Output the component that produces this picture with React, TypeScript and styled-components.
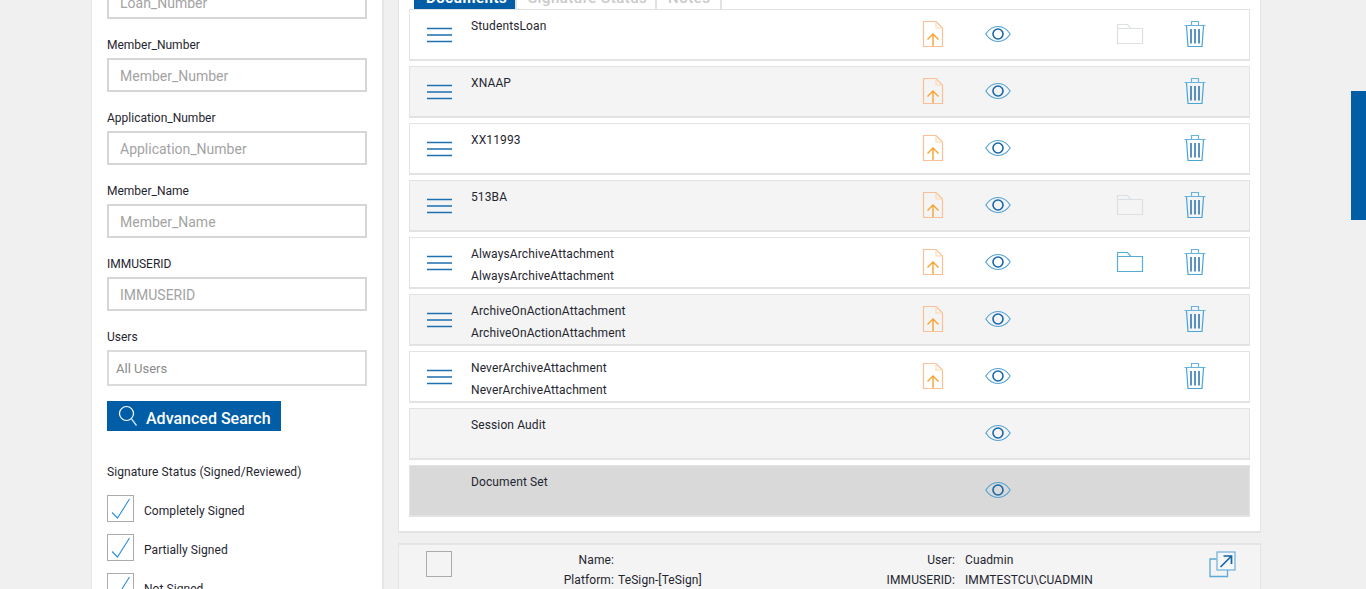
import React from "react";
import styled, { createGlobalStyle } from "styled-components";

const GlobalStyle = createGlobalStyle`
  html, body {
    margin: 0;
    padding: 0;
    height: 100%;
    overflow: hidden;
    background: #f0f0f0;
    font-family: Roboto, "Liberation Sans", Arial, sans-serif;
  }
  * { box-sizing: border-box; }
`;

const Page = styled.div`
  position: relative;
  height: 589px;
  overflow: hidden;
  display: flex;
  align-items: flex-start;
  padding-left: 91px;
  gap: 14px;
`;

const Sidebar = styled.aside`
  width: 293px;
  height: 640px;
  flex: none;
  margin-top: -36px;
  padding: 0 15px;
  background: #fff;
  border-left: 1px solid #e6e6e6;
  border-right: 2px solid #e6e6e6;
`;

const Field = styled.div`
  margin-bottom: 18px;
`;

const FieldLabel = styled.label`
  display: block;
  height: 16px;
  margin-bottom: 5px;
  font-size: 12px;
  line-height: 16px;
  color: #1f2630;
`;

const TextInput = styled.input`
  display: block;
  width: 260px;
  height: 34px;
  padding: 2px 11px 0;
  border: 2px solid #d6d6d6;
  border-radius: 0;
  outline: none;
  background: #fff;
  font-family: inherit;
  font-size: 14px;
  &::placeholder {
    color: #a3a3a3;
    opacity: 1;
  }
`;

const SelectBox = styled.div`
  width: 260px;
  height: 36px;
  padding-left: 7px;
  display: flex;
  align-items: center;
  border: 2px solid #dadada;
  font-size: 13px;
  color: #8b8b8b;
`;

const SearchButton = styled.button`
  display: flex;
  align-items: center;
  gap: 8px;
  width: 174px;
  height: 30px;
  margin-top: -3px;
  padding: 0 0 0 11px;
  border: none;
  background: #005da6;
  color: #fff;
  font-family: inherit;
  font-size: 16px;
  font-weight: 500;
`;

const SearchLabel = styled.span`
  padding-top: 4px;
`;

const SearchGlyph = styled.span`
  display: flex;
  margin-top: -1px;
`;

const StatusTitle = styled.div`
  margin: 33px 0 15px;
  height: 16px;
  font-size: 12px;
  line-height: 16px;
  letter-spacing: 0.08px;
  color: #1f2630;
`;

const CheckRow = styled.div`
  display: flex;
  align-items: center;
  gap: 10px;
  height: 27px;
  margin-bottom: 12px;
  font-size: 12px;
  letter-spacing: 0.06px;
  color: #1f2630;
`;

const CheckText = styled.span`
  padding-top: 4px;
`;

const CheckBox = styled.span`
  flex: none;
  display: flex;
  align-items: center;
  justify-content: center;
  width: 27px;
  height: 27px;
  border: 1px solid #ababab;
  background: #fff;
`;

const Content = styled.main`
  width: 863px;
  flex: none;
`;

const Panel = styled.section`
  height: 553px;
  margin-top: -20px;
  padding: 0 10px;
  background: #fff;
  border-right: 1px solid #e4e4e4;
  border-bottom: 2px solid #e4e4e4;
  border-left: 1px solid #e4e4e4;
`;

const Tabs = styled.div`
  display: flex;
  height: 29px;
  padding-left: 5px;
`;

const Tab = styled.div<{ $active?: boolean; $width: number }>`
  width: ${({ $width }) => $width}px;
  height: 29px;
  padding-left: ${({ $active }) => ($active ? 12 : 11)}px;
  border-right: 2px solid #e2e2e2;
  background: ${({ $active }) => ($active ? "#005da6" : "#fff")};
  color: ${({ $active }) => ($active ? "#fff" : "#c9c9c9")};
  font-size: 15px;
  font-weight: ${({ $active }) => ($active ? 700 : 500)};
  line-height: 36px;
  letter-spacing: 0.5px;
  white-space: nowrap;
`;

const RowList = styled.div`
  display: flex;
  flex-direction: column;
  gap: 5px;
`;

const Row = styled.div<{ $tone: "white" | "grey" | "dark" }>`
  display: grid;
  grid-template-columns: 61px 429px 65px 66px 66px 65px 66px;
  align-items: center;
  height: 52px;
  border: 1px solid #e3e3e3;
  border-bottom-width: 2px;
  background: ${({ $tone }) =>
    $tone === "white" ? "#fff" : $tone === "grey" ? "#f4f4f4" : "#d9d9d9"};
`;

const MenuCell = styled.div`
  display: flex;
  justify-content: flex-start;
  padding-left: 17px;
`;

const NameCell = styled.div`
  align-self: start;
  padding-top: 5px;
  font-size: 12px;
  line-height: 22px;
  letter-spacing: 0.12px;
  color: #1f2630;
`;

const IconCell = styled.div<{ $column: number }>`
  grid-column: ${({ $column }) => $column};
  display: flex;
  justify-content: center;
  margin-bottom: 2px;
`;

const Footer = styled.section`
  display: flex;
  align-items: flex-start;
  height: 60px;
  margin-top: 10px;
  padding: 6px 0 0 27px;
  background: #f4f4f4;
  border-style: solid;
  border-color: #e4e4e4;
  border-width: 2px 1px 0;
`;

const FooterCheck = styled.span`
  flex: none;
  width: 26px;
  height: 26px;
  border: 1px solid #ababab;
`;

const InfoGrid = styled.div`
  display: grid;
  grid-template-columns: 162px 183px 158px 254px;
  grid-auto-rows: 20px;
  width: 757px;
  margin-top: -1px;
  font-size: 12px;
  line-height: 20px;
  letter-spacing: 0.1px;
  color: #1f2630;
`;

const InfoLabel = styled.span`
  text-align: right;
`;

const InfoValue = styled.span<{ $wide?: boolean }>`
  padding-left: ${({ $wide }) => ($wide ? 10 : 4)}px;
  white-space: nowrap;
`;

const PopoutIcon = styled.span`
  display: block;
  flex: none;
`;

const SideTab = styled.div`
  position: absolute;
  top: 91px;
  right: 0;
  width: 15px;
  height: 129px;
  background: #005da6;
`;

const MenuIcon = () => (
  <svg width="25" height="16" viewBox="0 0 25 16" fill="none">
    <path d="M0 1.5H25M0 8H25M0 14.5H25" stroke="#1d6fb0" strokeWidth="1.6" />
  </svg>
);

const UploadIcon = () => (
  <svg width="22" height="28" viewBox="0 0 22 28" fill="none">
    <path d="M1.5 1.5H14L20.5 8V26.5H1.5Z" stroke="#fbbf97" strokeWidth="1.2" />
    <path d="M14 1.5V8H20.5" stroke="#fbd9a8" strokeWidth="1.1" />
    <path d="M11 26V14M5.5 19.5L11 14L16.5 19.5" stroke="#f9a131" strokeWidth="1.4" />
  </svg>
);

const EyeIcon = () => (
  <svg width="26" height="18" viewBox="0 0 26 18" fill="none">
    <path d="M0.8 9C4 4 8.2 1.5 13 1.5S22 4 25.2 9C22 14 17.8 16.5 13 16.5S4 14 0.8 9Z" stroke="#4fa0d2" strokeWidth="1.1" />
    <circle cx="13" cy="9" r="5" stroke="#1766a8" strokeWidth="1.6" />
  </svg>
);

const FolderIcon = ({ $on }: { $on?: boolean }) => {
  const color = $on ? "#55aed6" : "#dbe0e5";
  return (
    <svg width="28" height="22" viewBox="0 0 28 22" fill="none">
      <path d="M1.5 20.5V1.5H11.5L15 5.5H26.5V20.5Z M1.5 5.5H15" stroke={color} strokeWidth="1.2" />
    </svg>
  );
};

const TrashIcon = () => (
  <svg width="22" height="28" viewBox="0 0 22 28" fill="none">
    <path d="M0.5 5.5H21.5M7.5 5V1.5H14.5V5" stroke="#67b4dc" strokeWidth="1.2" />
    <path d="M2.5 6L4 26.5H18L19.5 6" stroke="#4aa5d6" strokeWidth="1.2" />
    <path d="M7 9V23.5M11 9V23.5M15 9V23.5" stroke="#1766a8" strokeWidth="1.4" />
  </svg>
);

const SearchIcon = () => (
  <svg width="20" height="22" viewBox="0 0 20 22" fill="none">
    <circle cx="8.5" cy="8.5" r="7" stroke="#fff" strokeWidth="1.2" />
    <path d="M13.5 14L18.5 20.5" stroke="#cfe3f3" strokeWidth="1.3" />
  </svg>
);

const CheckMark = () => (
  <svg width="20" height="22" viewBox="0 0 20 22" fill="none">
    <path d="M1 14.5L6.5 20L18.5 1" stroke="#2f8fd8" strokeWidth="1.1" />
  </svg>
);

const Popout = () => (
  <svg width="27" height="27" viewBox="0 0 27 27" fill="none">
    <path d="M7.5 8H1V25.5H18.5V19" stroke="#5aa9d8" strokeWidth="1.3" />
    <rect x="8" y="1" width="18" height="18" fill="#f6f6f6" stroke="#6cb0dc" strokeWidth="1.2" />
    <path d="M11.5 16L22 5.5M14.5 5H22.5V13" stroke="#1766a8" strokeWidth="1.7" />
  </svg>
);

const fields = ["Loan_Number", "Member_Number", "Application_Number", "Member_Name", "IMMUSERID"];

const statuses = ["Completely Signed", "Partially Signed", "Not Signed"];

type Doc = {
  lines: string[];
  tone: "white" | "grey" | "dark";
  folder?: "faint" | "on";
  actions: boolean;
};

const docs: Doc[] = [
  { lines: ["StudentsLoan"], tone: "white", folder: "faint", actions: true },
  { lines: ["XNAAP"], tone: "grey", actions: true },
  { lines: ["XX11993"], tone: "white", actions: true },
  { lines: ["513BA"], tone: "grey", folder: "faint", actions: true },
  { lines: ["AlwaysArchiveAttachment", "AlwaysArchiveAttachment"], tone: "white", folder: "on", actions: true },
  { lines: ["ArchiveOnActionAttachment", "ArchiveOnActionAttachment"], tone: "grey", actions: true },
  { lines: ["NeverArchiveAttachment", "NeverArchiveAttachment"], tone: "white", actions: true },
  { lines: ["Session Audit"], tone: "grey", actions: false },
  { lines: ["Document Set"], tone: "dark", actions: false },
];

export default function App() {
  return (
    <>
      <GlobalStyle />
      <Page>
        <Sidebar>
          {fields.map((name) => (
            <Field key={name}>
              <FieldLabel>{name}</FieldLabel>
              <TextInput placeholder={name} readOnly />
            </Field>
          ))}
          <Field>
            <FieldLabel>Users</FieldLabel>
            <SelectBox>All Users</SelectBox>
          </Field>
          <SearchButton>
            <SearchGlyph>
              <SearchIcon />
            </SearchGlyph>
            <SearchLabel>Advanced Search</SearchLabel>
          </SearchButton>
          <StatusTitle>Signature Status (Signed/Reviewed)</StatusTitle>
          {statuses.map((status) => (
            <CheckRow key={status}>
              <CheckBox>
                <CheckMark />
              </CheckBox>
              <CheckText>{status}</CheckText>
            </CheckRow>
          ))}
        </Sidebar>
        <Content>
          <Panel>
            <Tabs>
              <Tab $active $width={103}>Documents</Tab>
              <Tab $width={140}>Signature Status</Tab>
              <Tab $width={65}>Notes</Tab>
            </Tabs>
            <RowList>
              {docs.map((doc) => (
                <Row key={doc.lines[0]} $tone={doc.tone}>
                  <MenuCell>{doc.actions ? <MenuIcon /> : null}</MenuCell>
                  <NameCell>
                    {doc.lines.map((line, i) => (
                      <div key={i}>{line}</div>
                    ))}
                  </NameCell>
                  {doc.actions ? (
                    <IconCell $column={3}>
                      <UploadIcon />
                    </IconCell>
                  ) : null}
                  <IconCell $column={4}>
                    <EyeIcon />
                  </IconCell>
                  {doc.folder ? (
                    <IconCell $column={6}>
                      <FolderIcon $on={doc.folder === "on"} />
                    </IconCell>
                  ) : null}
                  {doc.actions ? (
                    <IconCell $column={7}>
                      <TrashIcon />
                    </IconCell>
                  ) : null}
                </Row>
              ))}
            </RowList>
          </Panel>
          <Footer>
            <FooterCheck />
            <InfoGrid>
              <InfoLabel>Name:</InfoLabel>
              <InfoValue />
              <InfoLabel>User:</InfoLabel>
              <InfoValue $wide>Cuadmin</InfoValue>
              <InfoLabel>Platform:</InfoLabel>
              <InfoValue>TeSign-[TeSign]</InfoValue>
              <InfoLabel>IMMUSERID:</InfoLabel>
              <InfoValue $wide>IMMTESTCU\CUADMIN</InfoValue>
            </InfoGrid>
            <PopoutIcon>
              <Popout />
            </PopoutIcon>
          </Footer>
        </Content>
        <SideTab />
      </Page>
    </>
  );
}
